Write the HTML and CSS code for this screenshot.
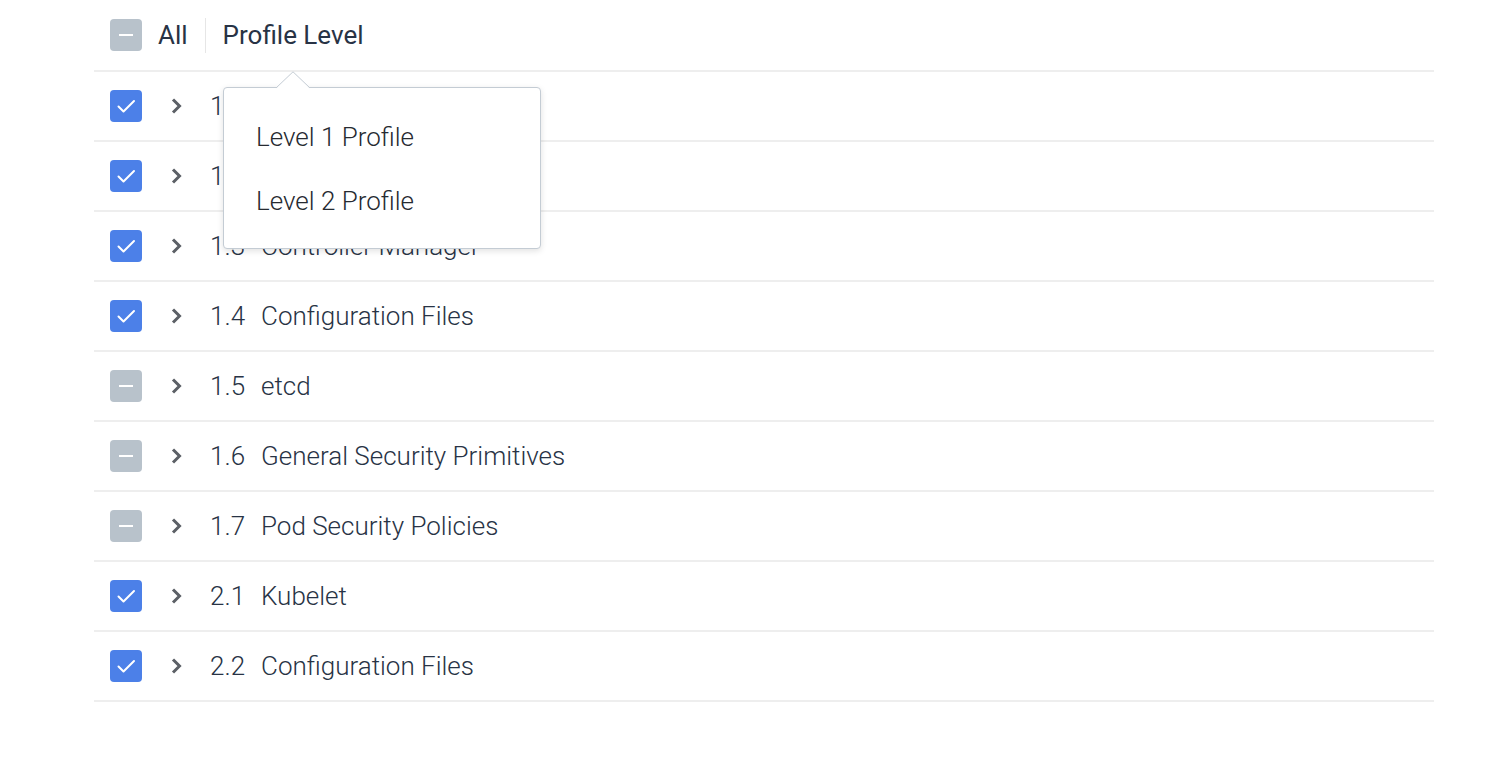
FILE: index.html
```html
<!DOCTYPE html>
<html>
<head>
<meta charset="utf-8">
<link rel="stylesheet" href="styles.css">
</head>
<body>
<div class="list">
  <div class="header">
    <span class="cb cb-partial"><svg viewBox="0 0 32 32"><path d="M9 16h14"/></svg></span>
    <span class="all">All</span>
    <span class="sep"></span>
    <span class="hdr-title">Profile Level</span>
  </div>

  <div class="row"><span class="cb cb-on"><svg viewBox="0 0 32 32"><path d="M8.5 16.5l5 5 10.5-10.5"/></svg></span><svg class="chev" viewBox="0 0 12 16"><path d="M2 1.5l6.5 6.5-6.5 6.5"/></svg><span class="num">1.1</span><span class="title">API Server</span></div>
  <div class="row"><span class="cb cb-on"><svg viewBox="0 0 32 32"><path d="M8.5 16.5l5 5 10.5-10.5"/></svg></span><svg class="chev" viewBox="0 0 12 16"><path d="M2 1.5l6.5 6.5-6.5 6.5"/></svg><span class="num">1.2</span><span class="title">Scheduler</span></div>
  <div class="row"><span class="cb cb-on"><svg viewBox="0 0 32 32"><path d="M8.5 16.5l5 5 10.5-10.5"/></svg></span><svg class="chev" viewBox="0 0 12 16"><path d="M2 1.5l6.5 6.5-6.5 6.5"/></svg><span class="num">1.3</span><span class="title">Controller Manager</span></div>
  <div class="row"><span class="cb cb-on"><svg viewBox="0 0 32 32"><path d="M8.5 16.5l5 5 10.5-10.5"/></svg></span><svg class="chev" viewBox="0 0 12 16"><path d="M2 1.5l6.5 6.5-6.5 6.5"/></svg><span class="num">1.4</span><span class="title">Configuration Files</span></div>
  <div class="row"><span class="cb cb-partial"><svg viewBox="0 0 32 32"><path d="M9 16h14"/></svg></span><svg class="chev" viewBox="0 0 12 16"><path d="M2 1.5l6.5 6.5-6.5 6.5"/></svg><span class="num">1.5</span><span class="title">etcd</span></div>
  <div class="row"><span class="cb cb-partial"><svg viewBox="0 0 32 32"><path d="M9 16h14"/></svg></span><svg class="chev" viewBox="0 0 12 16"><path d="M2 1.5l6.5 6.5-6.5 6.5"/></svg><span class="num">1.6</span><span class="title">General Security Primitives</span></div>
  <div class="row"><span class="cb cb-partial"><svg viewBox="0 0 32 32"><path d="M9 16h14"/></svg></span><svg class="chev" viewBox="0 0 12 16"><path d="M2 1.5l6.5 6.5-6.5 6.5"/></svg><span class="num">1.7</span><span class="title">Pod Security Policies</span></div>
  <div class="row"><span class="cb cb-on"><svg viewBox="0 0 32 32"><path d="M8.5 16.5l5 5 10.5-10.5"/></svg></span><svg class="chev" viewBox="0 0 12 16"><path d="M2 1.5l6.5 6.5-6.5 6.5"/></svg><span class="num">2.1</span><span class="title">Kubelet</span></div>
  <div class="row"><span class="cb cb-on"><svg viewBox="0 0 32 32"><path d="M8.5 16.5l5 5 10.5-10.5"/></svg></span><svg class="chev" viewBox="0 0 12 16"><path d="M2 1.5l6.5 6.5-6.5 6.5"/></svg><span class="num">2.2</span><span class="title">Configuration Files</span></div>

  <div class="menu">
    <svg class="menu-arrow" viewBox="0 0 34 18"><path class="fill" d="M0 17.5L17 0.8 34 17.5z"/><path class="stroke" d="M0 17L17 0.8 34 17"/></svg>
    <div class="menu-item">Level 1 Profile</div>
    <div class="menu-item">Level 2 Profile</div>
  </div>
</div>
</body>
</html>
```

FILE: styles.css
```css
html, body {
  margin: 0;
  padding: 0;
  background: #ffffff;
}
body {
  font-family: Roboto, "Liberation Sans", sans-serif;
  color: #283345;
}
.list {
  position: relative;
  width: 1340px;
  margin-left: 94px;
}
.header {
  display: flex;
  align-items: center;
  height: 70px;
  padding-left: 16px;
  border-bottom: 2px solid #eeeeee;
  font-size: 26px;
  font-weight: 400;
}
.all {
  margin-left: 16px;
}
.sep {
  width: 1px;
  height: 35px;
  background: #e6e6e6;
  margin: 0 17px 0 17px;
}
.row {
  display: flex;
  align-items: center;
  height: 68px;
  padding-left: 16px;
  border-bottom: 2px solid #eeeeee;
  font-size: 26px;
  font-weight: 300;
}
.cb {
  width: 32px;
  height: 32px;
  border-radius: 4px;
  flex: none;
  display: block;
}
.cb svg {
  display: block;
  width: 32px;
  height: 32px;
  fill: none;
  stroke: #ffffff;
  stroke-width: 2;
  stroke-linecap: round;
  stroke-linejoin: round;
}
.cb-on {
  background: #4c80e8;
}
.cb-partial {
  background: #b8c2cb;
}
.cb-partial svg {
  stroke-width: 2;
  stroke-linecap: butt;
}
.chev {
  width: 12px;
  height: 16px;
  margin-left: 29px;
  fill: none;
  stroke: #5c6066;
  stroke-width: 3;
  flex: none;
}
.num {
  margin-left: 27px;
  width: 51px;
  flex: none;
}
.menu {
  position: absolute;
  left: 129px;
  top: 87px;
  width: 316px;
  padding: 16px 0;
  background: #ffffff;
  border: 1px solid #c4ccd4;
  border-radius: 4px;
  box-shadow: 0 2px 6px rgba(0, 0, 0, 0.12);
  font-size: 26px;
  font-weight: 300;
  color: #262a31;
}
.menu-arrow {
  position: absolute;
  left: 52px;
  top: -17px;
  width: 34px;
  height: 18px;
  display: block;
}
.menu-arrow .fill {
  fill: #ffffff;
}
.menu-arrow .stroke {
  fill: none;
  stroke: #c4ccd4;
  stroke-width: 1;
}
.menu-item {
  height: 64px;
  line-height: 66px;
  padding-left: 32px;
}
```
